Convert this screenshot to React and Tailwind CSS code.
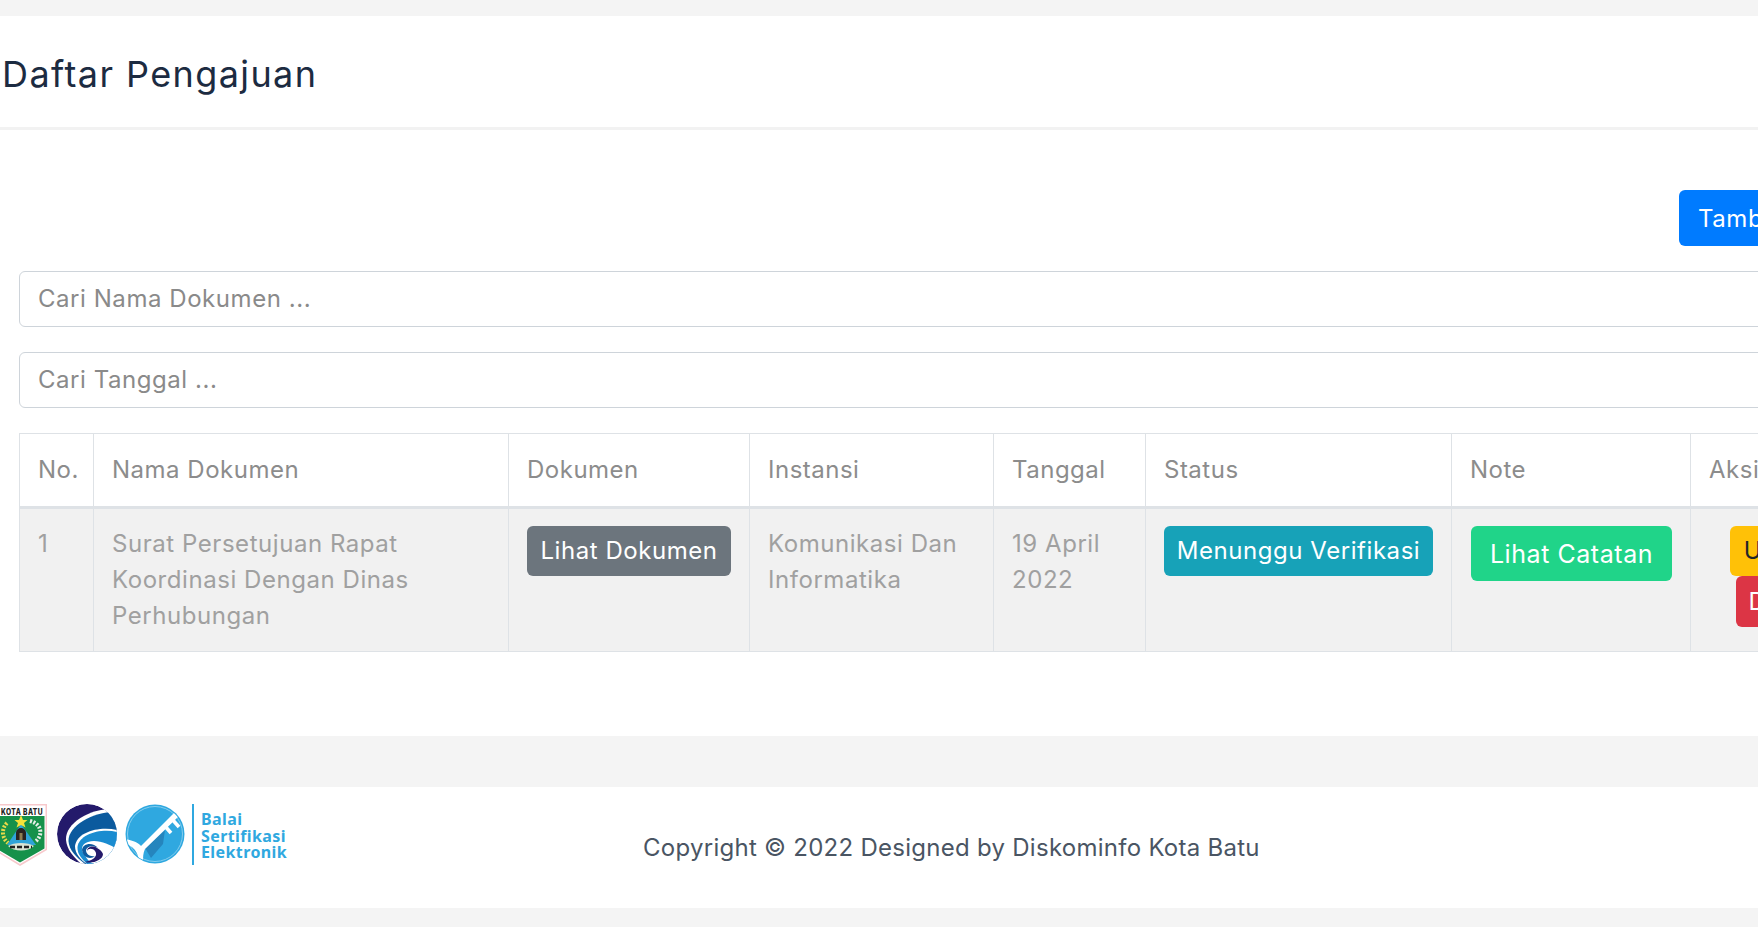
import React from 'react';

const columns = [74, 415, 241, 244, 152, 306, 239, 192];

const headers = ['No.', 'Nama Dokumen', 'Dokumen', 'Instansi', 'Tanggal', 'Status', 'Note', 'Aksi'];

const KotaBatuLogo = () => (
  <svg width="47" height="62" viewBox="0 0 47 62" className="shrink-0">
    <path d="M-6 0H47V46L20 62L-6 46Z" fill="#f7c9cc" />
    <path d="M-5 1.5H45.5V45L20 60L-5 45Z" fill="#fff" />
    <text x="1" y="10.5" fontSize="8.5" fontWeight="800" fontFamily="Inter, sans-serif" fill="#222" textLength="42" lengthAdjust="spacingAndGlyphs">KOTA BATU</text>
    <path d="M-4 12H44.5V44.5L20 58.5L-4 44.5Z" fill="#16914a" />
    <path d="M21 20L36 41H7Z" fill="#2fa3d8" />
    <path d="M21 11L23 16L27.5 16L24 19L25.5 23.5L21 21L16.5 23.5L18 19L14.5 16L19 16Z" fill="#f4e23a" />
    <path d="M16 36V29C16 26 18.5 24 21 24C23.5 24 26 26 26 29V36Z" fill="#2a2320" />
    <rect x="19.5" y="29" width="3" height="7" fill="#8f7f52" />
    <path d="M7 19C1 25 2 34 8 39" fill="none" stroke="#e7d94a" strokeWidth="4" strokeDasharray="2 1.5" />
    <path d="M30 17C42 20 43 31 36 37" fill="none" stroke="#e8efe8" strokeWidth="4" strokeDasharray="2 1.5" />
    <path d="M8 42C14 38 28 38 34 42C28 48 14 48 8 42Z" fill="#d9e3d2" />
    <path d="M10 43H32" stroke="#222" strokeWidth="2.5" strokeDasharray="5 2" />
  </svg>
);

const KominfoLogo = () => (
  <svg width="60" height="60" viewBox="0 0 60 60" className="shrink-0 ml-[10px]">
    <defs>
      <clipPath id="kominfo-clip">
        <circle cx="30" cy="30" r="30" />
      </clipPath>
    </defs>
    <g clipPath="url(#kominfo-clip)">
      <circle cx="30" cy="30" r="30" fill="#241a6b" />
      <path d="M60 5C36 3 8 18 9 36C10 46 16 52 24 60H60Z" fill="#fff" />
      <path d="M60 8C38 7 11 21 11.5 37C12 46 19 53 28 60H60Z" fill="#0b5a9e" />
      <path d="M60 26C42 22 20 28 18 42C18 50 24 56 30 60H60Z" fill="#fff" />
      <path d="M60 28C44 24 22 30 20.5 43C20 50 25 55 30 60H60Z" fill="#1a8cd0" />
      <path d="M60 45C52 40 40 35 31 38C24 40 23 47 28 51C30 56 34 60 40 60H60Z" fill="#fff" />
      <path d="M25 46C26 39 36 38 41 44C36 41 30 42 29 46C29 50 33 53 38 52C34 56 26 54 25 46Z" fill="#0e5a9e" />
      <path d="M30 47C31 44 36 44 38 47C41 51 38 56 28 58C36 60 46 56 46 50C45 47 42 45 40 44C36 41 30 43 30 47Z" fill="#241a6b" />
    </g>
  </svg>
);

const KeyLogo = () => (
  <svg width="60" height="60" viewBox="0 0 60 60" className="shrink-0 ml-[8px]">
    <defs>
      <clipPath id="key-clip">
        <circle cx="30" cy="30" r="28.5" />
      </clipPath>
    </defs>
    <circle cx="30" cy="30" r="29.5" fill="#2fa8e0" />
    <circle cx="30" cy="30" r="27.5" fill="none" stroke="#a8dcf4" strokeWidth="0.7" />
    <g clipPath="url(#key-clip)">
      <path d="M20 44L40 26L38 40L26 54Z" fill="#2585bd" />
      <path d="M0 35C8 36 14 39 16 42L49 9L53 13L20 45C18 49 18 54 18 60H14C14 52 12 44 0 39Z" fill="#fff" />
      <path d="M39 21L46 29" stroke="#fff" strokeWidth="3.6" />
      <path d="M46 14L54 23" stroke="#fff" strokeWidth="3.6" />
    </g>
  </svg>
);

const App = () => {
  return (
    <div className="w-[1758px] h-[927px] overflow-hidden bg-[#f4f4f4] pt-4 font-['Inter','Liberation_Sans',sans-serif] text-[24px] leading-9 tracking-[0.55px] text-[#a0a0a0]">
      <div className="w-[1900px] bg-white">
        <div className="h-[114px] border-b-[3px] border-[#f2f2f2] pl-[2px] pt-[33px]">
          <h1 className="text-[36px] leading-[50px] font-normal tracking-[1.4px] text-[#1c2b41]">Daftar Pengajuan</h1>
        </div>

        <div className="pl-[19px] pr-[18px] pt-[60px] pb-[84px]">
          <div className="flex justify-end">
            <button className="w-[203px] h-14 rounded-md bg-[#007bff] pl-[19px] pt-[1px] text-left text-white">Tambah Data</button>
          </div>

          <input
            placeholder="Cari Nama Dokumen ..."
            className="mt-[25px] block w-full h-14 rounded-md border border-[#ced4da] bg-white pl-[18px] pr-[19px] pb-[2px] placeholder:text-[#8a8a8a] outline-none"
          />
          <input
            placeholder="Cari Tanggal ..."
            className="mt-[25px] block w-full h-14 rounded-md border border-[#ced4da] bg-white pl-[18px] pr-[19px] pb-[2px] placeholder:text-[#8a8a8a] outline-none"
          />

          <table className="mt-[25px] border-collapse table-fixed w-[1863px]">
            <colgroup>
              {columns.map((w, i) => (
                <col key={i} style={{ width: w }} />
              ))}
            </colgroup>
            <thead>
              <tr>
                {headers.map((h) => (
                  <th key={h} className="h-[74px] border border-b-[3px] border-[#dee2e6] px-[18px] text-left font-normal tracking-[0.5px] text-[#8c8c8c]">
                    {h}
                  </th>
                ))}
              </tr>
            </thead>
            <tbody>
              <tr className="bg-[#f1f1f1] align-top">
                <td className="border border-[#dee2e6] px-[18px] py-[17px]">1</td>
                <td className="border border-[#dee2e6] px-[18px] py-[17px]">Surat Persetujuan Rapat Koordinasi Dengan Dinas Perhubungan</td>
                <td className="border border-[#dee2e6] px-[18px] py-[17px]">
                  <span className="flex h-[50px] items-center justify-center rounded-md bg-[#6c757d] text-white">Lihat Dokumen</span>
                </td>
                <td className="border border-[#dee2e6] px-[18px] py-[17px]">Komunikasi Dan Informatika</td>
                <td className="border border-[#dee2e6] px-[18px] py-[17px]">19 April 2022</td>
                <td className="border border-[#dee2e6] px-[18px] py-[17px]">
                  <span className="flex h-[50px] items-center justify-center rounded-md bg-[#17a2b8] text-white">Menunggu Verifikasi</span>
                </td>
                <td className="border border-[#dee2e6] pl-[19px] pr-[18px] py-[17px]">
                  <span className="flex h-[55px] items-center justify-center rounded-md bg-[#20d489] text-[25px] tracking-[0.55px] text-white">Lihat Catatan</span>
                </td>
                <td className="border border-[#dee2e6] px-[18px] py-[17px]">
                  <div className="flex flex-col items-center">
                    <span className="flex h-[50px] items-center rounded-md bg-[#ffc107] px-[14px] text-[#212529]">Update</span>
                    <span className="flex h-[51px] items-center rounded-md bg-[#dc3545] px-[12px] text-white">Delete</span>
                  </div>
                </td>
              </tr>
            </tbody>
          </table>
        </div>
      </div>

      <div className="mt-[51px] flex h-[121px] w-full items-start bg-white pt-[17px]">
        <KotaBatuLogo />
        <KominfoLogo />
        <KeyLogo />
        <div className="ml-[7px] h-[61px] w-[2px] shrink-0 bg-[#2fa8e0]" />
        <div className="ml-[7px] w-[92px] shrink-0 pt-[7px] font-['Noto_Sans',sans-serif] text-[16px] leading-[16.5px] font-bold tracking-[0.4px] text-[#2fa8e0]">
          <div>Balai</div>
          <div>Sertifikasi</div>
          <div>Elektronik</div>
        </div>
        <p className="ml-[350px] pt-[26px] tracking-[0.27px] text-[#4a5563]">Copyright © 2022 Designed by Diskominfo Kota Batu</p>
      </div>
    </div>
  );
};

export default App;
